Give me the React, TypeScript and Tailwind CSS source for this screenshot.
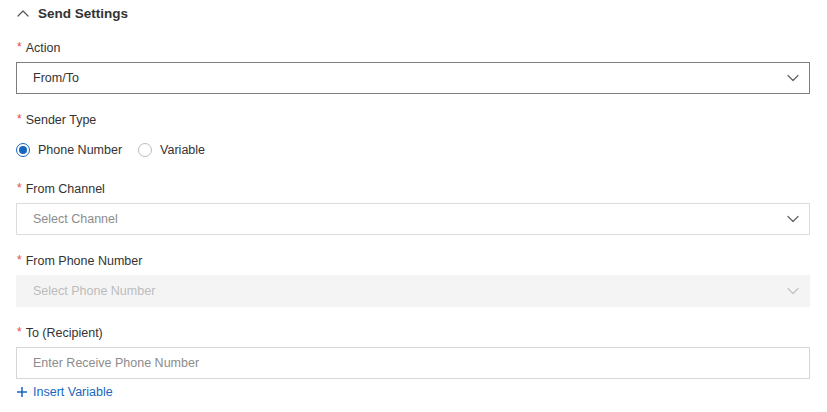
import React from 'react';

const Chevron: React.FC<{ color?: string }> = ({ color = '#666' }) => (
  <svg width="14" height="14" viewBox="0 0 14 14" fill="none">
    <path d="M2 4.5L7 9.5L12 4.5" stroke={color} strokeWidth="1.3" strokeLinecap="round" strokeLinejoin="round" />
  </svg>
);

const Label: React.FC<{ text: string }> = ({ text }) => (
  <div className="flex items-center h-5 pt-[2px] text-[12.5px] text-[#333]">
    <span className="text-[#e5484d] text-[12px] ml-[1px] mr-[4px] -mt-[3px]">*</span>
    {text}
  </div>
);

const Radio: React.FC<{ checked?: boolean; label: string }> = ({ checked, label }) => (
  <label className="flex items-center gap-2 text-[12.5px] text-[#333]">
    <span
      className={
        checked
          ? 'w-[14px] h-[14px] rounded-full border border-[#1766c2] flex items-center justify-center'
          : 'w-[14px] h-[14px] rounded-full border border-[#bdbdbd]'
      }
    >
      {checked && <span className="w-[8px] h-[8px] rounded-full bg-[#1766c2]" />}
    </span>
    {label}
  </label>
);

export default function App() {
  return (
    <div className="w-[827px] h-[412px] bg-white pl-4 pr-[17px]" style={{ fontFamily: '"Liberation Sans", Arial, sans-serif' }}>
      {/* Header */}
      <div className="flex items-center h-7 gap-[9px] text-[13.5px] font-bold text-[#333]">
        <svg width="12" height="12" viewBox="0 0 12 12" fill="none" className="ml-[1px]">
          <path d="M1 8L6 3L11 8" stroke="#555" strokeWidth="1.2" strokeLinecap="round" strokeLinejoin="round" />
        </svg>
        Send Settings
      </div>

      {/* Action */}
      <div className="mt-[9px]">
        <Label text="Action" />
        <div className="mt-[5px] h-8 border border-[#7d7d7d] flex items-center justify-between pl-4 pr-[9px] text-[12.5px] text-[#333]">
          From/To
          <Chevron />
        </div>
      </div>

      {/* Sender Type */}
      <div className="mt-[15px]">
        <Label text="Sender Type" />
        <div className="mt-[10px] h-5 pt-[2px] flex items-center gap-4">
          <Radio checked label="Phone Number" />
          <Radio label="Variable" />
        </div>
      </div>

      {/* From Channel */}
      <div className="mt-[19px]">
        <Label text="From Channel" />
        <div className="mt-[5px] h-8 border border-[#dcdcdc] flex items-center justify-between pl-4 pr-[9px] text-[12.5px] text-[#8c8c8c]">
          Select Channel
          <Chevron />
        </div>
      </div>

      {/* From Phone Number */}
      <div className="mt-[15px]">
        <Label text="From Phone Number" />
        <div className="mt-[5px] h-8 border border-[#f4f4f4] bg-[#f4f4f4] flex items-center justify-between pl-4 pr-[9px] text-[12.5px] text-[#bcbcbc]">
          Select Phone Number
          <Chevron color="#c4c4c4" />
        </div>
      </div>

      {/* To */}
      <div className="mt-[15px]">
        <Label text="To (Recipient)" />
        <div className="mt-[5px] h-8 border border-[#d6d6d6] flex items-center pl-4 text-[12.5px] text-[#8c8c8c]">
          Enter Receive Phone Number
        </div>
      </div>

      <div className="mt-[2px] h-5 pt-[2px] flex items-center gap-[5px] text-[12.5px] text-[#1766c2]">
        <svg width="12" height="12" viewBox="0 0 12 12" fill="none">
          <path d="M6 1V11M1 6H11" stroke="#1766c2" strokeWidth="1.5" />
        </svg>
        Insert Variable
      </div>
    </div>
  );
}
